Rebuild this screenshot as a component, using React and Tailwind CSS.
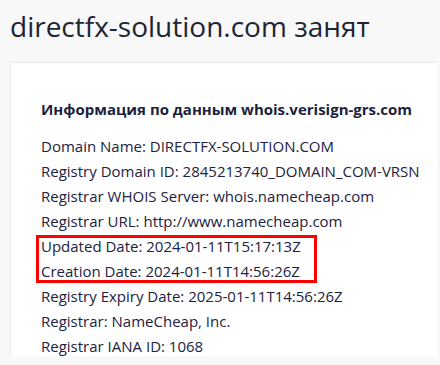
const rows = [
  "Domain Name: DIRECTFX-SOLUTION.COM",
  "Registry Domain ID: 2845213740_DOMAIN_COM-VRSN",
  "Registrar WHOIS Server: whois.namecheap.com",
  "Registrar URL: http://www.namecheap.com",
];

const marked = [
  "Updated Date: 2024-01-11T15:17:13Z",
  "Creation Date: 2024-01-11T14:56:26Z",
];

const rest = [
  "Registry Expiry Date: 2025-01-11T14:56:26Z",
  "Registrar: NameCheap, Inc.",
  "Registrar IANA ID: 1068",
];

export default function App() {
  return (
    <div className="w-[440px] h-[365px] overflow-hidden bg-[#f8f8f8] font-['Open_Sans',sans-serif] text-[#22223f]">
      <h1 className="pl-[10px] pt-[7px] text-[28px] leading-[38px] text-[#1d2535]">
        directfx-solution.com занят
      </h1>
      <div className="ml-[11px] mt-[18px] mr-[2px] h-[294px] bg-white shadow-[-1px_-1px_2px_rgba(0,0,0,0.06)] pl-[30px] pt-[34px]">
        <h2 className="text-[15px] font-bold leading-[24px] text-[#1c1f3d]">
          Информация по данным whois.verisign-grs.com
        </h2>
        <div className="mt-[13px] text-[15px] leading-[25px]">
          {rows.map((r) => (
            <div key={r}>{r}</div>
          ))}
          <div className="relative">
            {marked.map((r) => (
              <div key={r}>{r}</div>
            ))}
            <div className="absolute left-[-5px] top-[1px] w-[281px] h-[48px] border-[3px] border-[#ff0000]" />
          </div>
          {rest.map((r) => (
            <div key={r}>{r}</div>
          ))}
        </div>
      </div>
    </div>
  );
}
